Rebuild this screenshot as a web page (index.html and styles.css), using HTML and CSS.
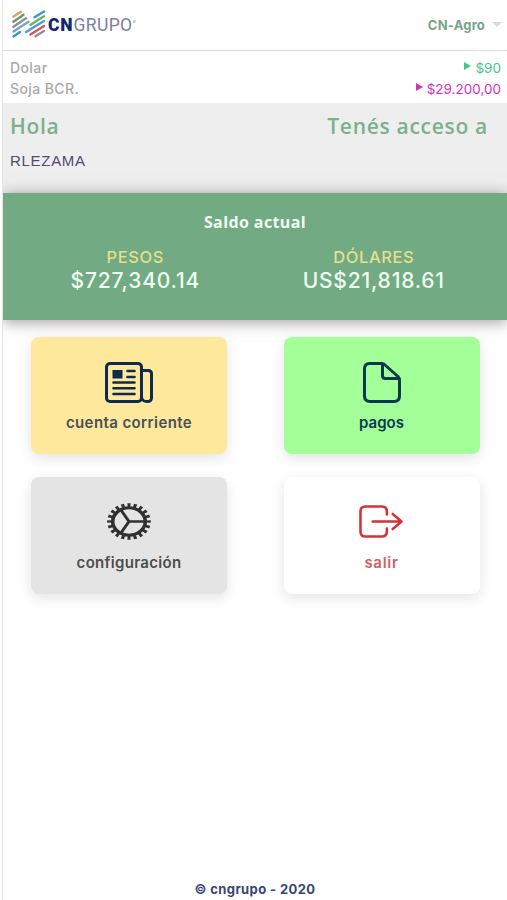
FILE: index.html
```html
<!DOCTYPE html>
<html lang="es">
<head>
<meta charset="utf-8">
<title>CN Grupo</title>
<link rel="stylesheet" href="styles.css">
</head>
<body>
<div class="app">
  <header class="topbar">
    <div class="brand">
      <svg class="brand-mark" viewBox="0 0 34 28" fill="none" stroke-width="2.4" stroke-linecap="round">
        <path stroke="#dda15f" d="M1.500 6.500 9 1.800"/>
        <path stroke="#5f9b72" d="M1.500 11.700 11.500 4.800"/>
        <path stroke="#9a8b92" d="M1.500 16.800 14 8.300"/>
        <path stroke="#6fa9c4" d="M1.500 21.600 16.500 11.800"/>
        <path stroke="#3c93cf" d="M1.500 26.400 8 22"/>
        <path stroke="#3c93cf" d="M22.500 7.300 32 1.500"/>
        <path stroke="#76ad62" d="M18.500 14.800 32 6.300"/>
        <path stroke="#4a9fd0" d="M14 22 32 11"/>
        <path stroke="#d8525c" d="M18.500 24.600 32 16"/>
        <path stroke="#9a8b92" d="M23.500 26.300 32 21"/>
      </svg>
      <span class="brand-name"><b>CN</b>GRUPO<i>°</i></span>
    </div>
    <div class="account"><span class="account-name">CN-Agro</span><span class="caret"></span></div>
  </header>
  <section class="rates">
    <div class="rate"><span class="rate-name">Dolar</span><span class="rate-value up"><i class="tick"></i><span>$90</span></span></div>
    <div class="rate"><span class="rate-name">Soja BCR.</span><span class="rate-value flat"><i class="tick"></i><span>$29.200,00</span></span></div>
  </section>
  <section class="hello">
    <div class="hello-row"><span>Hola</span><span>Tenés acceso a</span></div>
    <div class="user">RLEZAMA</div>
  </section>
  <section class="balance">
    <div class="balance-title">Saldo actual</div>
    <div class="balance-cols">
      <div><div class="currency">PESOS</div><div class="total">$727,340.14</div></div>
      <div><div class="currency">DÓLARES</div><div class="total">US$21,818.61</div></div>
    </div>
  </section>
  <main class="cards">
    <a class="card yellow">
      <svg width="48" height="41" viewBox="0 0 48 41" fill="none" stroke="currentColor" stroke-width="3" stroke-linejoin="round" stroke-linecap="round">
        <rect x="1.500" y="1.500" width="35" height="38" rx="3.500"/>
        <path d="M36.500 8.500h6.500q3.500 0 3.500 3v24.500q0 3.500-4.500 3.500t-5.500-4"/>
        <rect x="7.500" y="8" width="10" height="8.500" fill="currentColor" stroke="none"/>
        <path stroke-width="2.600" d="M22.500 9h7M22.500 15h7M8.500 20.500h21M8.500 26.300h21M8.500 32h21"/>
      </svg>
      <span>cuenta corriente</span>
    </a>
    <a class="card green">
      <svg width="38" height="41" viewBox="0 0 38 41" fill="none" stroke="currentColor" stroke-width="3" stroke-linejoin="round">
        <path d="M6.500 1.500H19Q20.500 1.500 22 3L35 14.500Q36.500 16 36.500 18V34q0 5.500-5.500 5.500H7q-5.500 0-5.500-5.500V7Q1.500 1.500 6.500 1.500Z"/>
        <path d="M19.500 2V13.500Q19.500 16.500 22.500 16.500H36"/>
      </svg>
      <span>pagos</span>
    </a>
    <a class="card gray">
      <svg width="44" height="37" viewBox="0 0 44 44" preserveAspectRatio="none" fill="none" stroke="currentColor">
        <circle cx="22" cy="22" r="16.300" stroke-width="3.600"/>
        <circle cx="22" cy="22" r="19.500" stroke-width="4.600" pathLength="80" stroke-dasharray="2 2" stroke-dashoffset="1"/>
        <path stroke-width="3" d="M22 22H38M22 22 13.500 7.500M22 22 13.500 36.500"/>
      </svg>
      <span>configuración</span>
    </a>
    <a class="card white">
      <svg width="44" height="33" viewBox="0 0 45 33" preserveAspectRatio="none" fill="none" stroke="currentColor" stroke-width="2.600" stroke-linejoin="round" stroke-linecap="round">
        <path d="M28.500 9.500V6.500q0-5-5-5H6.500q-5 0-5 5v20q0 5 5 5h17q5 0 5-5V23.500"/>
        <path d="M14 16.500H43M34.500 9 43.500 16.500 34.500 24"/>
      </svg>
      <span>salir</span>
    </a>
  </main>
  <footer class="footer">© cngrupo - 2020</footer>
</div>
</body>
</html>
```

FILE: styles.css
```css
* { box-sizing: border-box; }
body { margin: 0; background: #fff; font-family: Inter, "Liberation Sans", sans-serif; }
.app { height: 900px; margin-left: 2px; border-left: 1px solid #e6e6e6; display: flex; flex-direction: column; overflow: hidden; white-space: nowrap; }
.topbar { height: 51px; border-bottom: 1px solid #dcdcdc; display: flex; justify-content: space-between; padding: 0 4px 0 9px; flex: none; }
.brand { display: flex; align-items: flex-start; padding-top: 10px; }
.brand-mark { width: 34px; height: 28px; }
.brand-name { font: 17.5px/28px Roboto, sans-serif; color: #7c7d9e; margin-left: 2px; letter-spacing: .4px; }
.brand-name b { color: #14266b; font-weight: 900; letter-spacing: .8px; }
.brand-name i { font-style: normal; font-size: 9px; vertical-align: 4px; }
.account { display: flex; align-items: center; font-size: 13px; font-weight: 700; color: #78a489; letter-spacing: .2px; }
.caret { margin: 0 1px 2px 7px; border: 5px solid transparent; border-top: 5px solid #d4dada; border-bottom: 0; }
.rates { height: 52px; padding: 7px 6px 0 7px; flex: none; }
.rate { display: flex; justify-content: space-between; height: 21px; line-height: 20px; font-size: 14px; }
.rate-name { color: #a9a9a9; font-weight: 500; letter-spacing: .4px; }
.rate-value { font-size: 13.5px; display: flex; }
.up { color: #47c58c; }
.flat { color: #d032b5; }
.tick { border: 4px solid transparent; border-left: 7px solid; border-right: 0; height: 0; margin: 4px 4px 0 0; }
.hello { height: 90px; background: #eee; padding: 10px 19px 0 7px; flex: none; }
.hello-row { display: flex; justify-content: space-between; color: #7daf91; font: 600 21px/27px "Open Sans", sans-serif; letter-spacing: .7px; }
.user { font: 15px/20px "Liberation Sans", sans-serif; color: #514b72; margin-top: 11px; letter-spacing: .7px; }
.balance { height: 127px; background: #72aa83; color: #effff1; text-align: center; padding-top: 18px; box-shadow: 0 2px 14px rgba(70,50,60,.5); flex: none; }
.balance-title { font: 700 16px/22px "Open Sans", sans-serif; letter-spacing: .4px; }
.balance-cols { display: grid; grid-template-columns: 1fr 1fr; padding: 13px 14px 0 13px; }
.currency { color: #e5df8e; font-size: 16.5px; line-height: 22px; font-weight: 500; letter-spacing: .6px; }
.total { font-size: 21px; line-height: 26px; font-weight: 500; letter-spacing: .8px; }
.cards { display: grid; grid-template-columns: 196px 196px; grid-auto-rows: 117px; gap: 23px 57px; padding: 17px 0 0 28px; flex: 1; align-content: start; }
.card { border-radius: 8px; box-shadow: 0 4px 14px rgba(0,0,0,.11); display: flex; flex-direction: column; align-items: center; font-size: 15px; font-weight: 600; line-height: 20px; letter-spacing: .3px; padding-top: 25px; }
.card span { margin-top: 10px; }
.yellow { background: #fee89b; color: #10294f; }
.yellow span { color: #47505a; letter-spacing: .4px; }
.green { background: #a3ff97; color: #083950; }
.green svg { margin-right: 1px; }
.green span { letter-spacing: 0; margin-right: 1px; }
.gray { background: #e4e4e4; color: #303030; padding-top: 26px; }
.gray span { color: #4d4d4d; margin-top: 13px; }
.white { background: #fff; color: #d43237; padding-top: 28px; }
.white svg { margin-right: 2px; }
.white span { color: #cf6263; margin: 15px 1px 0 0; letter-spacing: .7px; }
.footer { height: 21px; text-align: center; font-size: 13px; line-height: 20px; font-weight: 700; letter-spacing: .4px; color: #384674; flex: none; }
```
